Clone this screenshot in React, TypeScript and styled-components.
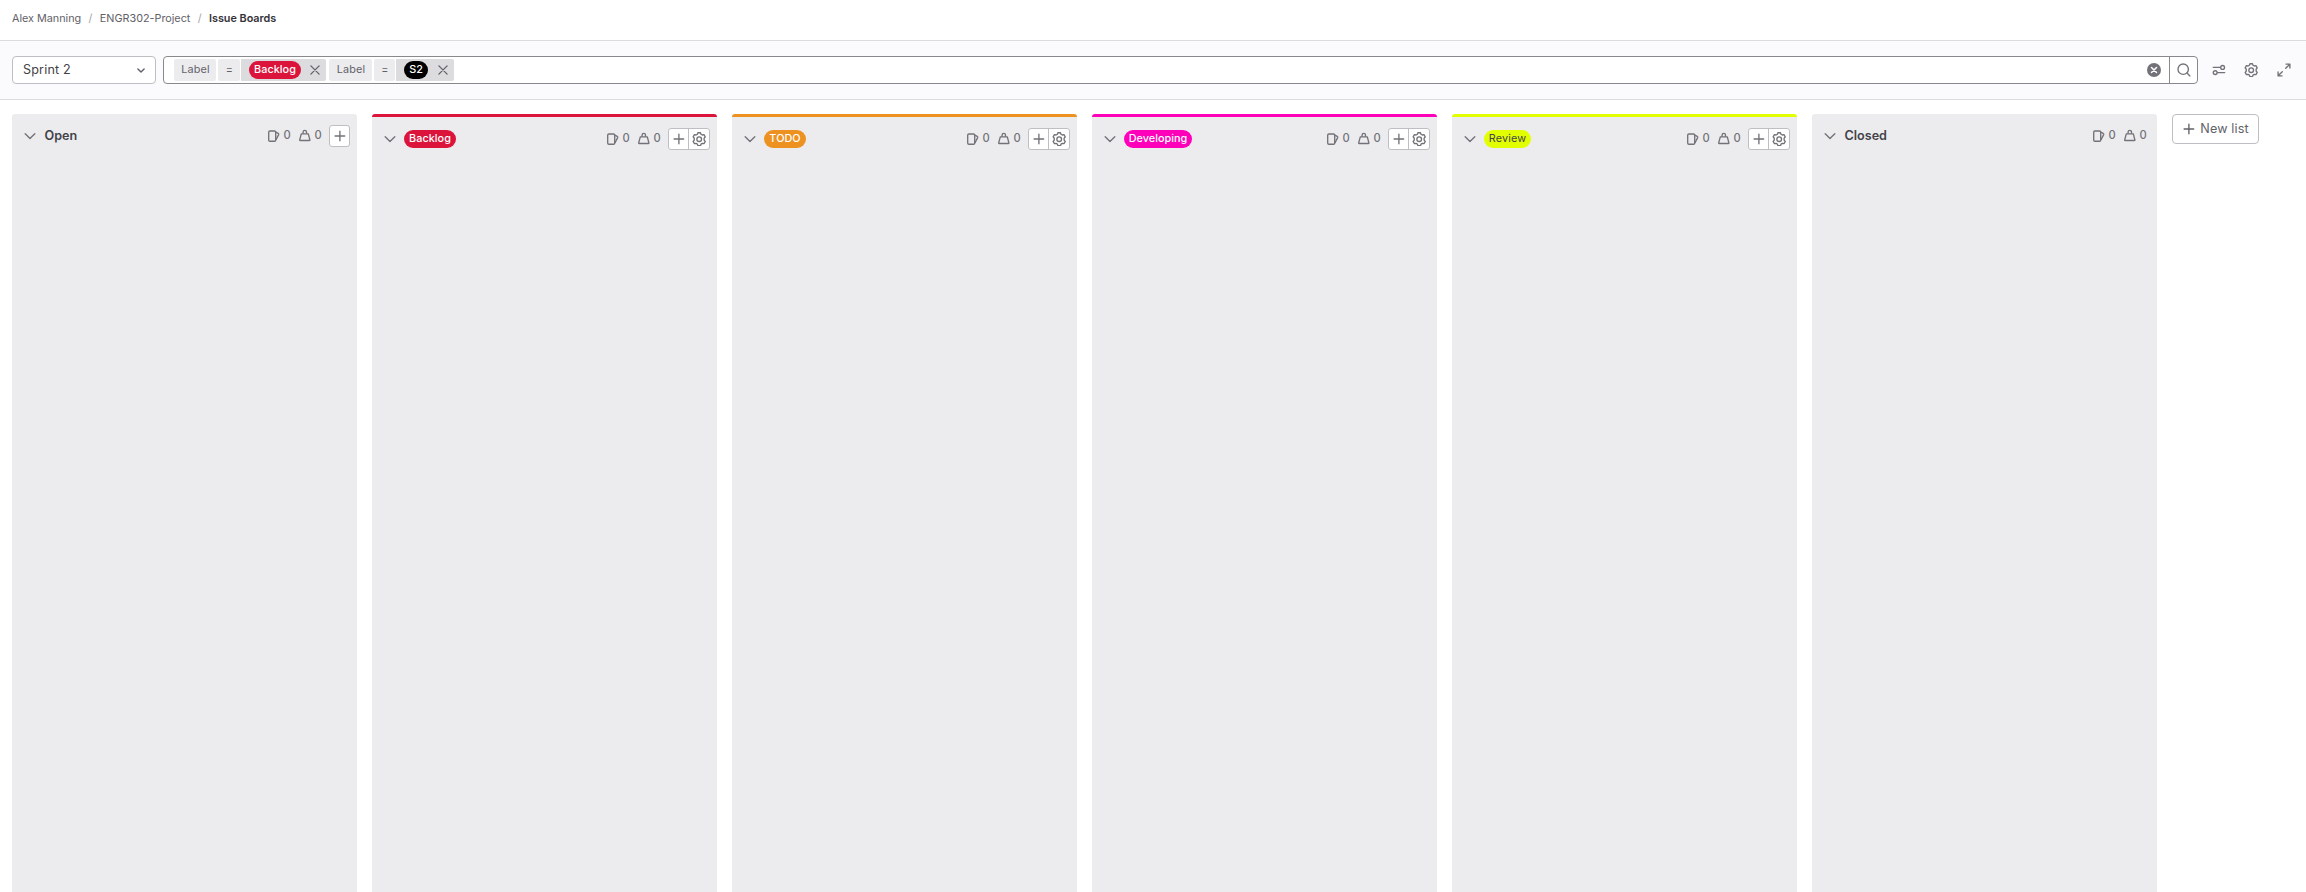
import React from "react";
import styled, { createGlobalStyle } from "styled-components";

const Global = createGlobalStyle`
  * { box-sizing: border-box; }
  body { margin: 0; background: #fff; color: #333238; font-family: Inter, "Liberation Sans", sans-serif; font-size: 12.6px; }
  svg { display: block; flex: none; fill: none; stroke: currentColor; }
`;

const Page = styled.div`
  display: flex;
  flex-direction: column;
  height: 892px;
  overflow: hidden;
`;

const Breadcrumbs = styled.nav`
  display: flex;
  align-items: center;
  height: 41px;
  padding: 0 12px 4px;
  border-bottom: 1px solid #dcdcde;
  font-size: 10.8px;
  color: #626168;
`;
const Crumb = styled.span<{ $current?: boolean }>`
  font-weight: ${(p) => (p.$current ? 600 : 400)};
  color: ${(p) => (p.$current ? "#333238" : "inherit")};
`;
const Slash = styled.span`
  width: 18.6px;
  text-align: center;
  color: #a4a3a8;
`;

const Toolbar = styled.div`
  display: flex;
  align-items: center;
  height: 59px;
  padding: 0 15px 0 12px;
  background: #fbfafd;
  border-bottom: 1px solid #dcdcde;
`;
const BoardSelect = styled.button`
  display: flex;
  align-items: center;
  justify-content: space-between;
  width: 144px;
  height: 28px;
  padding: 0 10px 1px;
  margin-right: 7px;
  border: 1px solid #bfbfc3;
  border-radius: 4px;
  background: #fff;
  font: inherit;
  color: #434248;
  letter-spacing: 0.15px;
`;
const SearchBox = styled.div`
  display: flex;
  align-items: center;
  flex: 1;
  height: 28px;
  padding-left: 10px;
  border: 1px solid #89888d;
  border-radius: 4px;
  background: #fff;
  color: #737278;
`;
const Token = styled.div`
  display: flex;
  gap: 2px;
  margin-right: 3px;
  font-size: 10.8px;
  color: #626168;
`;
const Segment = styled.span<{ $w: number }>`
  display: flex;
  align-items: center;
  justify-content: center;
  width: ${(p) => p.$w}px;
  height: 22px;
  padding: 0 0 1px 1px;
  background: #ececef;
  border-radius: 2px;
  letter-spacing: 0.2px;
`;
const TokenValue = styled.span<{ $w: number }>`
  display: flex;
  align-items: center;
  justify-content: space-between;
  width: ${(p) => p.$w}px;
  height: 22px;
  padding: 0 6px 0 8px;
  margin-left: -1px;
  background: #dcdcde;
  border-radius: 0 2px 2px 0;
`;
const Label = styled.span<{ $bg: string; $w: number; $dark?: boolean }>`
  display: flex;
  align-items: center;
  justify-content: center;
  width: ${(p) => p.$w}px;
  height: 18px;
  padding-bottom: 1px;
  border-radius: 9px;
  background: ${(p) => p.$bg};
  color: ${(p) => (p.$dark ? "#434248" : "#fff")};
  font-size: 10.8px;
  font-weight: ${(p) => (p.$dark ? 400 : 500)};
  letter-spacing: ${(p) => (p.$dark ? "0.15px" : "0.05px")};
  white-space: nowrap;
`;
const Spacer = styled.span`
  flex: 1;
`;
const SearchButton = styled.span`
  display: flex;
  align-items: center;
  justify-content: center;
  width: 28px;
  height: 26px;
  margin-left: 8px;
  border-left: 1px solid #89888d;
`;
const Tools = styled.div`
  display: flex;
  align-items: center;
  gap: 18px;
  margin-left: 14px;
  color: #737278;
  svg:last-child {
    margin-left: 0.6px;
  }
`;

const Board = styled.main`
  display: flex;
  flex: 1;
  align-items: stretch;
  gap: 15px;
  padding: 14px 12px 0;
`;
const Column = styled.section<{ $accent?: string }>`
  width: 345px;
  flex: none;
  background: #ececef;
  border-radius: 3px 3px 0 0;
  border-top: ${(p) => (p.$accent ? `3px solid ${p.$accent}` : "0")};
`;
const ColumnHeader = styled.header`
  display: flex;
  align-items: center;
  height: 44px;
  padding: 0 7px 0 11px;
  color: #737278;
`;
const Heading = styled.h2`
  margin: 0 0 0 7.5px;
  padding-bottom: 2px;
  flex: 1;
  display: flex;
  font-size: 12.6px;
  font-weight: 600;
  color: #434248;
`;
const BadgeSlot = styled.span`
  flex: 1;
  margin: -1px 0 0 7px;
`;
const Counts = styled.div<{ $last?: boolean }>`
  display: flex;
  align-items: center;
  margin-right: ${(p) => (p.$last ? -4 : 0)}px;
  font-size: 11.2px;
`;
const Count = styled.span`
  width: 17px;
  padding: 0 0 3px 2.4px;
  font-weight: 500;
`;
const ButtonGroup = styled.div`
  display: flex;
  height: 22px;
  border: 1px solid #bfbfc3;
  border-radius: 3px;
  background: #fff;
  color: #737278;
`;
const GroupButton = styled.span`
  display: flex;
  align-items: center;
  justify-content: center;
  width: 19px;
  & + & {
    width: 21px;
    border-left: 1px solid #bfbfc3;
  }
`;
const NewList = styled.button`
  display: flex;
  align-items: center;
  justify-content: center;
  gap: 5px;
  width: 87px;
  height: 30px;
  padding: 0 0 1px 1px;
  border: 1px solid #bfbfc3;
  border-radius: 4px;
  background: #fff;
  color: #626168;
  font: inherit;
  letter-spacing: 0.12px;
`;

const Chevron = () => (
  <svg width="14" height="14" viewBox="0 0 14 14" strokeWidth="1.35" strokeLinecap="round" strokeLinejoin="round">
    <path d="M2.2 4.8 7 9.6l4.8-4.8" />
  </svg>
);
const SmallChevron = () => (
  <svg width="8" height="8" viewBox="0 0 8 8" strokeWidth="1.4" strokeLinecap="round" strokeLinejoin="round" color="#626168">
    <path d="M.9 2.9 4 6l3.1-3.1" />
  </svg>
);
const Cross = () => (
  <svg width="10" height="10" viewBox="0 0 10 10" strokeWidth="1.3" strokeLinecap="round">
    <path d="m.9.9 8.2 8.2M9.1.9.9 9.1" />
  </svg>
);
const Plus = () => (
  <svg width="12" height="12" viewBox="0 0 12 12" strokeWidth="1.35" strokeLinecap="round">
    <path d="M5.9 1.2v9.6M1.1 6h9.6" />
  </svg>
);
const Gear = () => (
  <svg width="14.4" height="14.4" viewBox="0 0 16 16" strokeWidth="1.5" strokeLinejoin="round">
    <path d="M6.6.8h2.8l.6 1.7 1.5.85 1.8-.35 1.4 2.4L13.5 6.9v2.2l1.2 1.5-1.4 2.4-1.8-.35-1.5.85-.6 1.7H6.6L6 13.5l-1.5-.85L2.7 13l-1.4-2.4 1.2-1.5V6.9L1.3 5.4 2.7 3l1.8.35L6 2.5z" />
    <circle cx="8" cy="8" r="2.6" />
  </svg>
);
const IssuesIcon = () => (
  <svg width="14" height="14" viewBox="0 0 14 14" strokeWidth="1.35" strokeLinejoin="round" strokeLinecap="round">
    <rect x="1.7" y="2" width="7" height="10.2" rx="1.2" />
    <path d="m8.8 3.2 2.4 1.2c.5.3.7.7.5 1.2L9 10.6" />
  </svg>
);
const WeightIcon = () => (
  <svg width="14" height="14" viewBox="0 0 14 14" strokeWidth="1.35" strokeLinejoin="round">
    <path d="M3.3 4.8h7l1.6 6c.1.4-.1.7-.5.7H2.2c-.4 0-.6-.3-.5-.7z" />
    <path d="M5.1 4.8V3a1.7 1.7 0 0 1 3.4 0v1.8" />
  </svg>
);
const ClearIcon = () => (
  <svg width="14" height="14" viewBox="0 0 14 14">
    <circle cx="7" cy="7" r="7" fill="#737278" stroke="none" />
    <path d="m4.5 4.5 5 5M9.5 4.5l-5 5" stroke="#fff" strokeWidth="1.5" strokeLinecap="round" />
  </svg>
);
const SearchIcon = () => (
  <svg width="14" height="14" viewBox="0 0 14 14" strokeWidth="1.35" strokeLinecap="round">
    <circle cx="6.2" cy="6.2" r="5.2" />
    <path d="m10 10 2.9 2.9" />
  </svg>
);
const SlidersIcon = () => (
  <svg width="14" height="14" viewBox="0 0 14 14" strokeWidth="1.35" strokeLinecap="round">
    <path d="M1.3 4.4h7.1M5.6 9.6h7.1" />
    <circle cx="10.6" cy="4.4" r="1.9" />
    <circle cx="3.2" cy="9.6" r="1.9" />
  </svg>
);
const ExpandIcon = () => (
  <svg width="14" height="14" viewBox="0 0 14 14" strokeWidth="1.35" strokeLinecap="round" strokeLinejoin="round">
    <path d="M9 1.1h3.9V5M12.6 1.4 8.7 5.3M5 12.9H1.1V9M1.4 12.6l3.9-3.9" />
  </svg>
);

type List = { title: string; accent?: string; width?: number; dark?: boolean; add?: boolean };

const lists: List[] = [
  { title: "Open", add: true },
  { title: "Backlog", accent: "#dc143c", width: 52, add: true },
  { title: "TODO", accent: "#ed9121", width: 42, add: true },
  { title: "Developing", accent: "#ff00ba", width: 68, add: true },
  { title: "Review", accent: "#e1ff00", width: 47, dark: true, add: true },
  { title: "Closed" },
];

const BoardList = ({ title, accent, width, dark, add }: List) => (
  <Column $accent={accent}>
    <ColumnHeader>
      <Chevron />
      {accent ? (
        <BadgeSlot>
          <Label $bg={accent} $w={width ?? 50} $dark={dark}>{title}</Label>
        </BadgeSlot>
      ) : (
        <Heading>{title}</Heading>
      )}
      <Counts $last={!add}>
        <IssuesIcon />
        <Count>0</Count>
        <WeightIcon />
        <Count>0</Count>
      </Counts>
      {add && (
        <ButtonGroup>
          <GroupButton><Plus /></GroupButton>
          {accent && <GroupButton><Gear /></GroupButton>}
        </ButtonGroup>
      )}
    </ColumnHeader>
  </Column>
);

export default function App() {
  return (
    <Page>
      <Global />
      <Breadcrumbs>
        <Crumb>Alex Manning</Crumb>
        <Slash>/</Slash>
        <Crumb>ENGR302-Project</Crumb>
        <Slash>/</Slash>
        <Crumb $current>Issue Boards</Crumb>
      </Breadcrumbs>
      <Toolbar>
        <BoardSelect>
          Sprint 2
          <SmallChevron />
        </BoardSelect>
        <SearchBox>
          <Token>
            <Segment $w={42}>Label</Segment>
            <Segment $w={22}>=</Segment>
            <TokenValue $w={85}>
              <Label $bg="#dc143c" $w={52}>Backlog</Label>
              <Cross />
            </TokenValue>
          </Token>
          <Token>
            <Segment $w={43}>Label</Segment>
            <Segment $w={21}>=</Segment>
            <TokenValue $w={58}>
              <Label $bg="#000" $w={24}>S2</Label>
              <Cross />
            </TokenValue>
          </Token>
          <Spacer />
          <ClearIcon />
          <SearchButton><SearchIcon /></SearchButton>
        </SearchBox>
        <Tools>
          <SlidersIcon />
          <Gear />
          <ExpandIcon />
        </Tools>
      </Toolbar>
      <Board>
        {lists.map((list) => (
          <BoardList key={list.title} {...list} />
        ))}
        <NewList><Plus />New list</NewList>
      </Board>
    </Page>
  );
}
